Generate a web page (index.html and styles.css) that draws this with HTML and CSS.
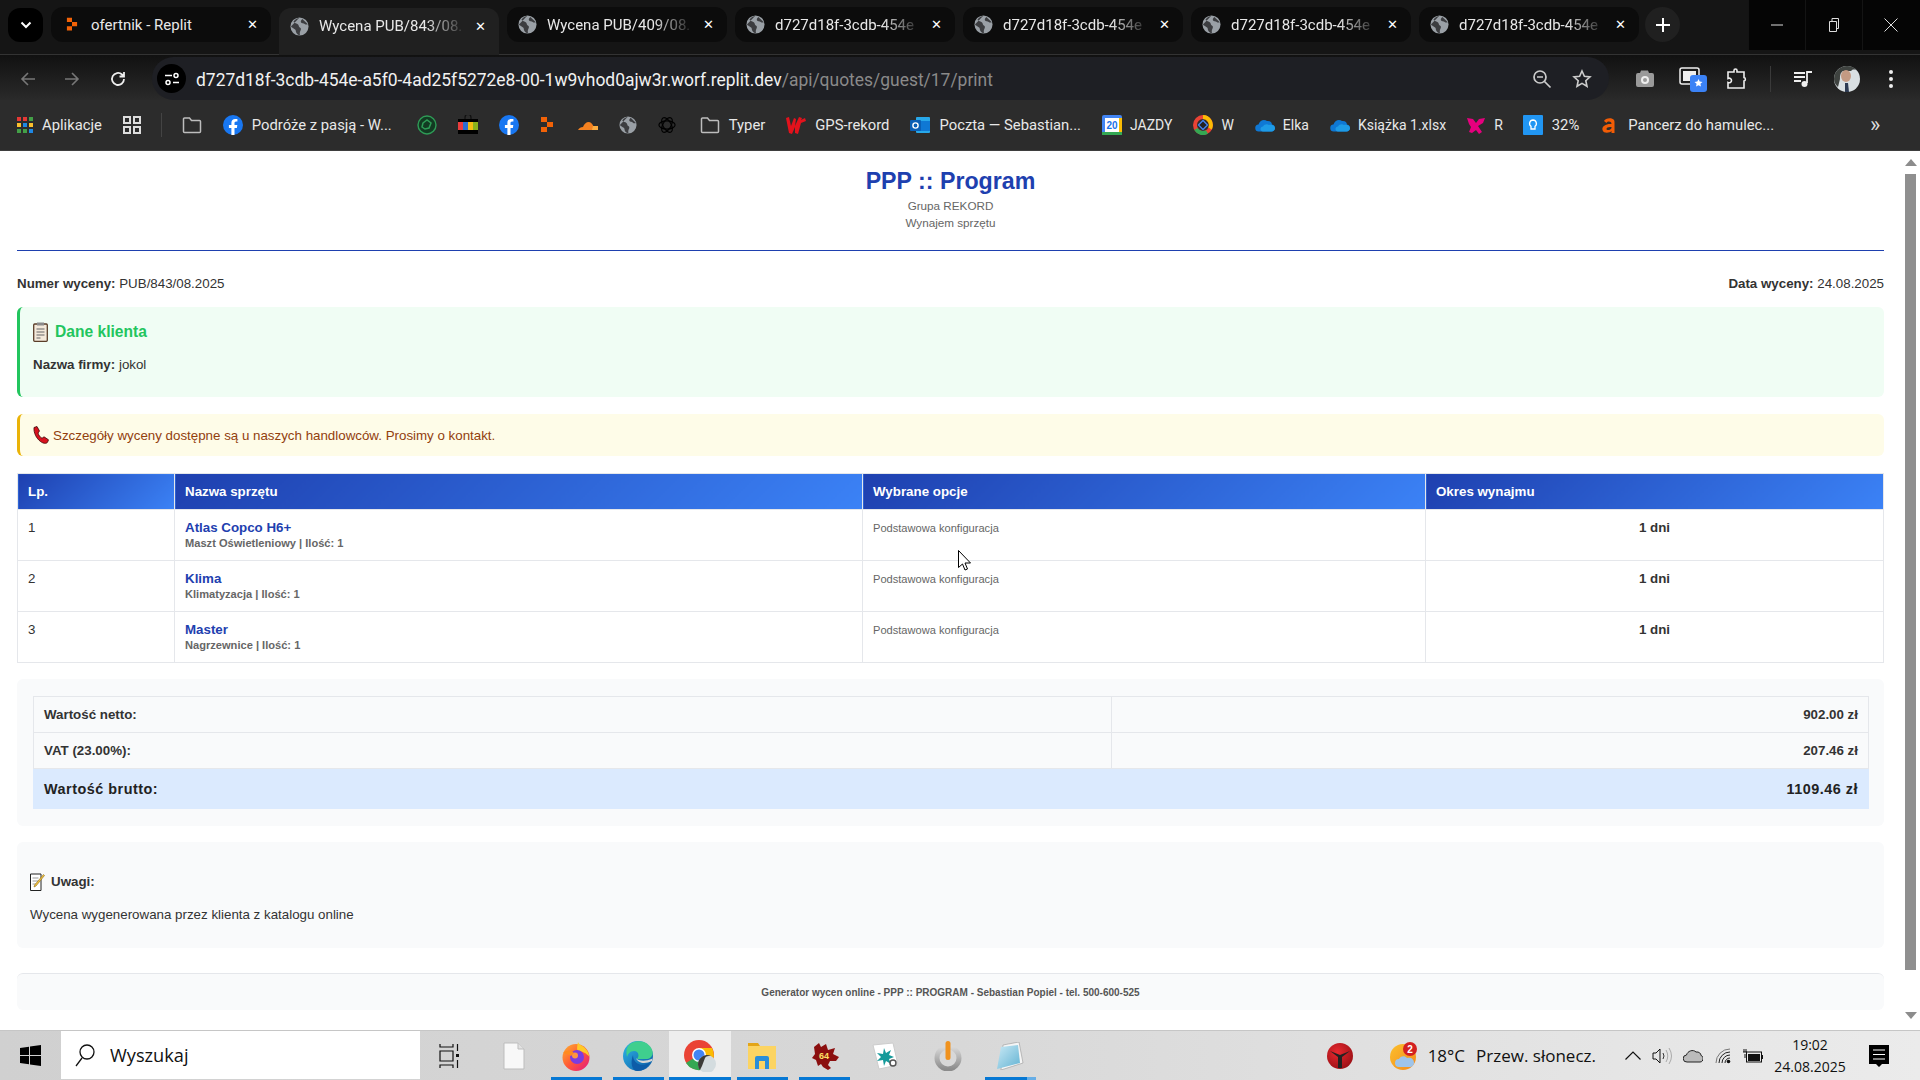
FILE: index.html
```html
<!DOCTYPE html>
<html lang="pl">
<head>
<meta charset="utf-8">
<title>Wycena PUB/843/08.2025</title>
<link rel="stylesheet" href="styles.css">
</head>
<body>
<svg class="defs" aria-hidden="true">
  <defs>
    <linearGradient id="ffg" x1="0" y1="0" x2="1" y2="1"><stop offset="0" stop-color="#ffb02e"/><stop offset=".5" stop-color="#ff5a36"/><stop offset="1" stop-color="#e31587"/></linearGradient>
    <linearGradient id="edg" x1="0" y1="0" x2="1" y2="1"><stop offset="0" stop-color="#2fb6e8"/><stop offset="1" stop-color="#0c59a4"/></linearGradient>
    <linearGradient id="pwr" x1="0" y1="0" x2="0" y2="1"><stop offset="0" stop-color="#d9d9d9"/><stop offset="1" stop-color="#8c8c8c"/></linearGradient>
    <linearGradient id="nte" x1="0" y1="0" x2="1" y2="1"><stop offset="0" stop-color="#c9e9f5"/><stop offset="1" stop-color="#63b3d3"/></linearGradient>
    <radialGradient id="ball" cx=".4" cy=".35" r=".8"><stop offset="0" stop-color="#e8292f"/><stop offset="1" stop-color="#8f0c12"/></radialGradient>
    <linearGradient id="wth" x1="0" y1="0" x2="1" y2="1"><stop offset="0" stop-color="#fcc02d"/><stop offset="1" stop-color="#f28a1d"/></linearGradient>
    <symbol id="globe" viewBox="0 0 20 20"><circle cx="10" cy="10" r="9.5" fill="#9aa0a6"/><path d="M10 .6c-2 1-5 2-6.400 4.500C5 7 7 6.500 8.500 8c1 1 .4 2.300 1.800 3 1.400.6 1.500 2 .7 3.500-.5 1-1 2.500-.5 4.800-3-.2-4.500-2.800-4.500-5 0-1.600-3-2-5-4.300M13 2c-1 1-2 2-1.500 3.400.6 1.500 3 .8 4 2 .7.800 2 .6 3.300.3" fill="#3c3d40"/></symbol>
    <symbol id="fb" viewBox="0 0 20 20"><circle cx="10" cy="10" r="10" fill="#1877f2"/><path d="M13.900 12.900l.4-2.900h-2.800V8.100c0-.8.400-1.600 1.600-1.600h1.300V4.100s-1.100-.2-2.200-.2c-2.300 0-3.800 1.400-3.800 3.900V10H5.900v2.900h2.500V20h3.100v-7.100z" fill="#fff"/></symbol>
    <symbol id="replit" viewBox="0 0 14 20"><path d="M1 2h6v5H1zM7 7h6v5H7zM1 12h6v5H1z" fill="#f26207"/></symbol>
    <symbol id="folder" viewBox="0 0 20 18"><path d="M1.500 15.500V3a1 1 0 0 1 1-1h5l2 2.500h8a1 1 0 0 1 1 1v10a1 1 0 0 1-1 1h-15a1 1 0 0 1-1-1z" fill="none" stroke="#bdbdbd" stroke-width="1.500"/></symbol>
    <symbol id="onedrive" viewBox="0 0 20 14"><path d="M4 13.500a3.500 3.500 0 0 1-.5-7C4.500 2.500 9 .5 12 3c3-.5 5 1.500 5 3.500 2 .3 3 1.700 3 3.300 0 2-1.500 3.700-3.500 3.700z" fill="#0f78d4"/><path d="M8 13.500c-1.500 0-2.500-1-2.500-2.500 0-1.300 1-2.300 2.500-2.500 1-2 4-3 6-1.500 2-.8 6 0 6 3.300 0 2-1.500 3.200-3.500 3.200z" fill="#1e9be6"/></symbol>
  </defs>
</svg>

<header class="tabstrip">
  <button class="tab-menu" aria-label="Lista kart"><svg width="12" height="8" viewBox="0 0 12 8"><path d="M1.500 1.500L6 6l4.500-4.500" fill="none" stroke="#fff" stroke-width="2"/></svg></button>
  <div class="tabs">
    <div class="tab"><span class="tab-icon"><svg width="12" height="17"><use href="#replit"/></svg></span><span class="tab-title">ofertnik - Replit</span><span class="tab-close">✕</span></div>
    <div class="tab tab-active"><span class="tab-icon"><svg width="19" height="19"><use href="#globe"/></svg></span><span class="tab-title tab-fade">Wycena PUB/843/08.</span><span class="tab-close">✕</span></div>
    <div class="tab"><span class="tab-icon"><svg width="19" height="19"><use href="#globe"/></svg></span><span class="tab-title tab-fade">Wycena PUB/409/08.</span><span class="tab-close">✕</span></div>
    <div class="tab"><span class="tab-icon"><svg width="19" height="19"><use href="#globe"/></svg></span><span class="tab-title tab-fade">d727d18f-3cdb-454e</span><span class="tab-close">✕</span></div>
    <div class="tab"><span class="tab-icon"><svg width="19" height="19"><use href="#globe"/></svg></span><span class="tab-title tab-fade">d727d18f-3cdb-454e</span><span class="tab-close">✕</span></div>
    <div class="tab"><span class="tab-icon"><svg width="19" height="19"><use href="#globe"/></svg></span><span class="tab-title tab-fade">d727d18f-3cdb-454e</span><span class="tab-close">✕</span></div>
    <div class="tab"><span class="tab-icon"><svg width="19" height="19"><use href="#globe"/></svg></span><span class="tab-title tab-fade">d727d18f-3cdb-454e</span><span class="tab-close">✕</span></div>
  </div>
  <button class="tab-new" aria-label="Nowa karta"><svg width="14" height="14" viewBox="0 0 14 14"><path d="M7 0v14M0 7h14" stroke="#fff" stroke-width="2"/></svg></button>
  <div class="winctl">
    <span class="winbtn"><svg width="12" height="12" viewBox="0 0 12 12"><path d="M0 6h12" stroke="#ddd"/></svg></span>
    <span class="winbtn"><svg width="14" height="14" viewBox="0 0 14 14"><path d="M2.500 3.500h7v10h-7zM5 3V.5h6.500v10H10" fill="none" stroke="#ddd"/></svg></span>
    <span class="winbtn"><svg width="14" height="14" viewBox="0 0 14 14"><path d="M.5.500l13 13M13.500.500l-13 13" stroke="#ddd"/></svg></span>
  </div>
</header>

<nav class="toolbar">
  <span class="tb-btn"><svg width="16" height="16" viewBox="0 0 16 16"><path d="M15 8H2M8 2L2 8l6 6" fill="none" stroke="#777" stroke-width="1.600"/></svg></span>
  <span class="tb-btn"><svg width="16" height="16" viewBox="0 0 16 16"><path d="M1 8h13M8 2l6 6-6 6" fill="none" stroke="#777" stroke-width="1.600"/></svg></span>
  <span class="tb-btn tb-reload"><svg width="18" height="18" viewBox="0 0 18 18"><path d="M15 9a6 6 0 1 1-2-4.500L15 6.500M15 2v4.500h-4.500" fill="none" stroke="#eee" stroke-width="1.800"/></svg></span>
  <div class="omnibox">
    <span class="site-info"><svg width="16" height="16" viewBox="0 0 16 16"><g fill="none" stroke="#fff" stroke-width="1.500"><path d="M1 4.500h7M9 11.500h6"/><circle cx="12" cy="4.500" r="2"/><circle cx="4" cy="11.500" r="2"/></g></svg></span>
    <span class="url"><span class="url-host">d727d18f-3cdb-454e-a5f0-4ad25f5272e8-00-1w9vhod0ajw3r.worf.replit.dev</span><span class="url-path">/api/quotes/guest/17/print</span></span>
    <span class="omni-btn"><svg width="20" height="20" viewBox="0 0 20 20"><circle cx="8" cy="8" r="6" fill="none" stroke="#ccc" stroke-width="1.700"/><path d="M12.500 12.500L18.500 18.500M5 8h6" stroke="#ccc" stroke-width="1.700"/></svg></span>
    <span class="omni-btn"><svg width="20" height="20" viewBox="0 0 20 20"><path d="M10 2l2.400 5.300 5.600.6-4.200 3.800 1.200 5.600L10 14.400l-5 2.900 1.200-5.600L2 7.900l5.600-.6z" fill="none" stroke="#ccc" stroke-width="1.600"/></svg></span>
  </div>
  <div class="tb-right">
    <span class="tb-btn"><svg width="20" height="18" viewBox="0 0 20 18"><path d="M1 5a2 2 0 0 1 2-2h2l1-2.500h7l1 2.500h3a2 2 0 0 1 2 2v10a2 2 0 0 1-2 2H3a2 2 0 0 1-2-2z" fill="#9a9a9a"/><circle cx="10" cy="10" r="4" fill="#eee"/><circle cx="10" cy="10" r="2" fill="#9a9a9a"/></svg></span>
    <span class="tb-btn tb-pip"><svg width="28" height="28" viewBox="0 0 28 28"><rect x="1" y="3" width="19" height="16" rx="2" fill="none" stroke="#eee" stroke-width="1.500"/><rect x="4" y="6" width="13" height="10" fill="#eee"/><rect x="11" y="10" width="17" height="17" rx="3" fill="#3b82f6"/><path d="M19.500 14l1.200 2.600 2.800.3-2.100 1.900.6 2.800-2.500-1.400-2.500 1.400.6-2.800-2.100-1.900 2.800-.3z" fill="#fff"/></svg></span>
    <span class="tb-btn"><svg width="22" height="22" viewBox="0 0 22 22"><path d="M2 4h6V2.500a1.500 1.500 0 0 1 3 0V4h7v5.500a1.800 1.800 0 0 1 0 3.500V20H2v-5.500c2 .8 3.500-.6 3.500-2S4 9.500 2 10.500z" fill="none" stroke="#eee" stroke-width="1.600"/></svg></span>
    <span class="tb-divider"></span>
    <span class="tb-btn"><svg width="20" height="18" viewBox="0 0 20 18"><path d="M1 3h11M1 7h11M1 11h7" stroke="#eee" stroke-width="1.800"/><path d="M14 13V2h5" fill="none" stroke="#eee" stroke-width="1.800"/><circle cx="11.500" cy="14" r="3" fill="#eee"/></svg></span>
    <span class="tb-btn"><svg width="26" height="26" viewBox="0 0 26 26"><circle cx="13" cy="13" r="13" fill="#d9dfe2"/><path d="M0 13A13 13 0 0 1 13 0c4 0 7 1 9 4-3-1-4 0-5 1H9C6 7 6 10 6 13l-2 8C2 19 0 17 0 13z" fill="#3f4340"/><ellipse cx="12" cy="10" rx="5" ry="6" fill="#c49a83"/><path d="M11 17h3l1 9h-4z" fill="#2d3a52"/></svg></span>
    <span class="tb-btn"><svg width="4" height="18" viewBox="0 0 4 18"><circle cx="2" cy="2" r="2" fill="#eee"/><circle cx="2" cy="9" r="2" fill="#eee"/><circle cx="2" cy="16" r="2" fill="#eee"/></svg></span>
  </div>
</nav>

<nav class="bookmarks">
  <span class="bm bm-w"><svg class="ic16" viewBox="0 0 16 16"><g><rect x="0" y="0" width="4" height="4" fill="#e53935"/><rect x="6" y="0" width="4" height="4" fill="#e53935"/><rect x="12" y="0" width="4" height="4" fill="#43a047"/><rect x="0" y="6" width="4" height="4" fill="#fbc02d"/><rect x="6" y="6" width="4" height="4" fill="#1e88e5"/><rect x="12" y="6" width="4" height="4" fill="#fbc02d"/><rect x="0" y="12" width="4" height="4" fill="#43a047"/><rect x="6" y="12" width="4" height="4" fill="#43a047"/><rect x="12" y="12" width="4" height="4" fill="#1e88e5"/></g></svg>Aplikacje</span>
  <span class="bm bm-only"><svg class="ic18" viewBox="0 0 18 18"><g fill="none" stroke="#ddd" stroke-width="2"><rect x="1" y="1" width="6" height="6"/><rect x="11" y="1" width="6" height="6"/><rect x="1" y="11" width="6" height="6"/><rect x="11" y="11" width="6" height="6"/></g></svg></span>
  <span class="bm-sep"></span>
  <span class="bm bm-only"><svg class="ic20" viewBox="0 0 20 18"><use href="#folder"/></svg></span>
  <span class="bm bm-w bm-wide"><svg class="ic20" viewBox="0 0 20 20"><use href="#fb"/></svg>Podróże z pasją - W...</span>
  <span class="bm bm-only"><svg class="ic20" viewBox="0 0 20 20"><circle cx="10" cy="10" r="9" fill="#123a22" stroke="#2e9b56" stroke-width="1.400"/><path d="M6 8l4-3 4 3-2 5-4 1-3-2z" fill="none" stroke="#2e9b56" stroke-width="1.500"/></svg></span>
  <span class="bm bm-only"><svg class="ic20" viewBox="0 0 20 20"><path d="M7 4V2.500a3 3 0 0 1 6 0V4" fill="none" stroke="#111" stroke-width="1.200"/><rect x="0" y="4" width="20" height="3" fill="#000"/><rect x="0" y="7" width="5" height="8" fill="#ea3d3d"/><rect x="5" y="7" width="5" height="8" fill="#2a6ed0"/><rect x="10" y="7" width="5" height="8" fill="#f3bd12"/><rect x="15" y="7" width="5" height="8" fill="#8ab21c"/><rect x="0" y="15" width="20" height="4" fill="#000"/></svg></span>
  <span class="bm bm-only"><svg class="ic20" viewBox="0 0 20 20"><use href="#fb"/></svg></span>
  <span class="bm bm-only bm-pull"><svg class="ic20" viewBox="0 0 14 20"><use href="#replit"/></svg></span>
  <span class="bm bm-only"><svg class="ic20" viewBox="0 0 20 20"><path d="M0 15c1-2 3-3 5-3 1-3 3-5 6-5 2 0 4 3 5 5 2 0 3 1 4 3z" fill="#f48120"/><path d="M15 11h5v4h-6z" fill="#fbad41"/></svg></span>
  <span class="bm bm-only"><svg class="ic18" viewBox="0 0 20 20"><use href="#globe"/></svg></span>
  <span class="bm bm-only"><svg class="ic18" viewBox="0 0 20 20"><g fill="none" stroke="#000" stroke-width="1.300"><ellipse cx="10" cy="10" rx="9" ry="4.500"/><ellipse cx="10" cy="10" rx="9" ry="4.500" transform="rotate(60 10 10)"/><ellipse cx="10" cy="10" rx="9" ry="4.500" transform="rotate(120 10 10)"/></g></svg></span>
  <span class="bm bm-w bm-push"><svg class="ic20" viewBox="0 0 20 18"><use href="#folder"/></svg>Typer</span>
  <span class="bm bm-w"><svg class="ic20" viewBox="0 0 20 20"><path d="M0 3l3-1 2 9 3-8 2 1-1 7 4-9 3 1-1 2 4-2 1 3-5 2-3 11-3-1 0-6-3 7-3-1z" fill="#e3121c"/></svg>GPS-rekord</span>
  <span class="bm bm-w"><svg class="ic20" viewBox="0 0 20 20"><rect x="6" y="2" width="14" height="16" rx="1" fill="#28a8ea"/><rect x="10" y="6" width="10" height="10" fill="#0f78d4"/><rect x="0" y="5" width="11" height="11" rx="1" fill="#0a5fb4"/><circle cx="5.500" cy="10.500" r="2.600" fill="none" stroke="#fff" stroke-width="1.400"/></svg>Poczta — Sebastian...</span>
  <span class="bm"><svg class="ic20" viewBox="0 0 20 20"><rect width="20" height="20" rx="2" fill="#4285f4"/><rect x="3" y="3" width="14" height="14" fill="#fff"/><rect y="17" width="20" height="3" fill="#34a853"/><rect x="17" y="3" width="3" height="14" fill="#fbbc04"/><text x="10" y="14" class="cal-num">20</text></svg>JAZDY</span>
  <span class="bm"><svg class="ic20" viewBox="0 0 20 20"><circle cx="10" cy="10" r="8" fill="none" stroke="#ea4335" stroke-width="4"/><path d="M3 14a8 8 0 0 0 11 3" fill="none" stroke="#34a853" stroke-width="4"/><path d="M10 2a8 8 0 0 1 7 11.500" fill="none" stroke="#fbbc04" stroke-width="4"/><path d="M5.500 10L10 5.500 14.500 10 10 14.500z" fill="#222" stroke="#4285f4" stroke-width="1.300"/></svg>W</span>
  <span class="bm"><svg class="ic20" viewBox="0 0 20 14"><use href="#onedrive"/></svg>Elka</span>
  <span class="bm"><svg class="ic20" viewBox="0 0 20 14"><use href="#onedrive"/></svg>Książka 1.xlsx</span>
  <span class="bm bm-less"><svg class="ic20" viewBox="0 0 20 20"><path d="M1 3l6 1 3 4 3-4 6-1-2 5-5 3 4 6-3 2-3-4-4 3-3-1 2-5-2-3z" fill="#e6007e"/></svg>R</span>
  <span class="bm bm-w bm-less"><svg class="ic20" viewBox="0 0 20 20"><rect width="20" height="20" rx="1" fill="#2196f3"/><path d="M10 5a3.500 3.500 0 0 0-2 6.300V14h4v-2.700A3.500 3.500 0 0 0 10 5z" fill="none" stroke="#fff" stroke-width="1.300"/></svg>32%</span>
  <span class="bm bm-w bm-less"><svg class="ic20" viewBox="0 0 20 20"><path d="M5 6c1-3 8-4 10-1 .6 1 .5 2.500.5 4v9h-3v-2c-1.500 2-8 3-9-1-1-4 4-6.500 9-6 0-3-4-3-5-1zm7.500 6c-3-.5-5 .6-5 2 0 1.500 4 1.500 5-1z" fill="#f25c05"/></svg>Pancerz do hamulec...</span>
  <span class="bm-more">»</span>
</nav>

<div class="viewport">
  <main class="page">
    <header class="doc-head">
      <h1 class="doc-title">PPP :: Program</h1>
      <p class="doc-sub">Grupa REKORD</p>
      <p class="doc-sub">Wynajem sprzętu</p>
    </header>
    <div class="doc-meta">
      <span><strong>Numer wyceny:</strong> PUB/843/08.2025</span>
      <span><strong>Data wyceny:</strong> 24.08.2025</span>
    </div>
    <section class="client-box">
      <h2 class="client-title"><svg class="emoji-clip" viewBox="0 0 15 20"><rect x=".7" y="2" width="13.600" height="17.300" rx="1" fill="#f3e9da" stroke="#5a3d28" stroke-width="1.300"/><rect x="4" y=".5" width="7" height="3" fill="#8a8a8a"/><path d="M3.500 7h8M3.500 10h8M3.500 13h8M3.500 16h4" stroke="#666" stroke-width="1.200"/></svg>Dane klienta</h2>
      <p class="client-line"><strong>Nazwa firmy:</strong> jokol</p>
    </section>
    <section class="notice-box"><svg class="emoji-phone" viewBox="0 0 16 18"><path d="M1 1.500L4 .5l2.500 4.500L5 7c.8 2.500 2 4 4 5.300l2-1.500 4.500 3-1 2.500c-1 1.500-4 1.500-7-.8C3.500 12.500.500 7 1 1.500z" fill="#d8121f" stroke="#3a0808" stroke-width=".8"/></svg><span class="notice-text">Szczegóły wyceny dostępne są u naszych handlowców. Prosimy o kontakt.</span></section>
    <table class="items">
      <colgroup><col class="c-lp"><col class="c-name"><col class="c-opt"><col class="c-per"></colgroup>
      <thead>
        <tr><th>Lp.</th><th>Nazwa sprzętu</th><th>Wybrane opcje</th><th>Okres wynajmu</th></tr>
      </thead>
      <tbody>
        <tr><td>1</td><td><div class="item-name">Atlas Copco H6+</div><div class="item-sub">Maszt Oświetleniowy | Ilość: 1</div></td><td class="item-opt">Podstawowa konfiguracja</td><td class="item-per">1 dni</td></tr>
        <tr><td>2</td><td><div class="item-name">Klima</div><div class="item-sub">Klimatyzacja | Ilość: 1</div></td><td class="item-opt">Podstawowa konfiguracja</td><td class="item-per">1 dni</td></tr>
        <tr><td>3</td><td><div class="item-name">Master</div><div class="item-sub">Nagrzewnice | Ilość: 1</div></td><td class="item-opt">Podstawowa konfiguracja</td><td class="item-per">1 dni</td></tr>
      </tbody>
    </table>
    <section class="totals-box">
      <table class="totals">
        <colgroup><col class="t-label"><col class="t-value"></colgroup>
        <tr><td>Wartość netto:</td><td>902.00 zł</td></tr>
        <tr><td>VAT (23.00%):</td><td>207.46 zł</td></tr>
        <tr class="gross"><td>Wartość brutto:</td><td>1109.46 zł</td></tr>
      </table>
    </section>
    <section class="notes-box">
      <div class="notes-head"><svg class="emoji-memo" viewBox="0 0 15 18"><path d="M.5 1h10.500v16.500H.5z" fill="#fff" stroke="#222"/><path d="M2.500 5h6M2.500 8h6M2.500 11h4" stroke="#999"/><path d="M13.500 1.500l1 1L6 13l-2 1 .6-2z" fill="#f5c342" stroke="#8a6a14" stroke-width=".6"/></svg><strong>Uwagi:</strong></div>
      <p class="notes-text">Wycena wygenerowana przez klienta z katalogu online</p>
    </section>
    <footer class="doc-foot">Generator wycen online - PPP :: PROGRAM - Sebastian Popiel - tel. 500-600-525</footer>
  </main>
  <aside class="scrollbar"><span class="sb-up"></span><span class="sb-thumb"></span><span class="sb-down"></span></aside>
  <svg class="cursor" width="13" height="21" viewBox="0 0 13 21"><path d="M.5.500v17l4-3.500 2.500 6 2.500-1-2.500-6h5.500z" fill="#fff" stroke="#000"/></svg>
</div>

<footer class="taskbar">
  <span class="start"><svg width="21" height="21" viewBox="0 0 21 21"><path d="M0 3l9-1.300V10H0zM10 1.500L21 0v10H10zM0 11h9v8.300L0 18zM10 11h11v10l-11-1.500z" fill="#000"/></svg></span>
  <div class="search"><svg width="20" height="24" viewBox="0 0 20 24"><circle cx="12" cy="9" r="7" fill="none" stroke="#111" stroke-width="1.300"/><path d="M7 15L1 23" stroke="#111" stroke-width="1.300"/></svg><span class="search-text">Wyszukaj</span></div>
  <div class="task-icons">
    <span class="task task-view"><svg width="20" height="24" viewBox="0 0 20 24"><path d="M1 0v3h13V0M1 7h13v10H1zM1 24v-3h13v3M18.500 0v7M18.500 16v8" fill="none" stroke="#111" stroke-width="1.200"/><rect x="17" y="10" width="3" height="3" fill="#111"/></svg></span>
    <span class="task task-doc"><svg width="22" height="28" viewBox="0 0 22 28"><path d="M1 1h14l6 6v20H1z" fill="#f8f8f8" stroke="#bdbdbd"/><path d="M15 1v6h6" fill="#e2e2e2" stroke="#bdbdbd"/></svg></span>
    <span class="task task-on"><svg width="28" height="30" viewBox="0 0 28 30"><circle cx="14" cy="16.500" r="13.500" fill="url(#ffg)"/><path d="M16 1c1 3 4 3 7 6 3 3 4 6 4.500 9-3-4-8-6-12-6-1-3 0-6 .5-9z" fill="#ffca28"/><circle cx="15" cy="16" r="7" fill="#7b3ce0"/><circle cx="13" cy="14.500" r="3" fill="#ff9640"/><path d="M1 12c3-3 8-3 11 0l-3 3c-3-2-6-2-8-3z" fill="#ff8a1f"/></svg></span>
    <span class="task task-on"><svg width="30" height="30" viewBox="0 0 30 30"><circle cx="15" cy="15" r="15" fill="url(#edg)"/><path d="M6 4C12-2 26-1 29.500 10 30.500 15 27 18 23 18L14 18C17 14 15 10 11 10 7 10 5 13 4 16 3 11 3 7 6 4z" fill="#3fcf8e"/><path d="M10 14c0 8 8 13 17 7.500-3 5.500-7 8.500-12.500 8.500-5.500 0-7.500-8-4.500-16z" fill="#0d5ca8"/><path d="M13 17C15 20 22 21 29.500 17.500L29 20C23 23 15 23 13 17z" fill="#d6d6d6"/></svg></span>
    <span class="task task-on task-current"><svg width="32" height="32" viewBox="0 0 32 32"><circle cx="15" cy="15" r="15" fill="#ea4335"/><path d="M15 15L2 23a15 15 0 0 0 17 6.500z" fill="#34a853"/><path d="M15 8h13a15 15 0 0 1-9 21.500L15 15z" fill="#fbbc04"/><circle cx="15" cy="15" r="7" fill="#fff"/><circle cx="15" cy="15" r="5.500" fill="#4285f4"/><circle cx="23" cy="24" r="9" fill="#d4dcdf"/><path d="M14 24a9 9 0 0 1 13-8c-3 0-5 0-6 2l-3 8-2 4c-1-1-2-3-2-6z" fill="#3b3b38"/></svg></span>
    <span class="task task-on"><svg width="28" height="26" viewBox="0 0 28 26"><path d="M0 0h10l2 3h-12z" fill="#e3a518"/><path d="M0 3h28v23H0z" fill="#fcd462"/><path d="M9 13h10a2 2 0 0 1 2 2v11h-4v-8h-6v8H7V15a2 2 0 0 1 2-2z" fill="#2b8ed8"/></svg></span>
    <span class="task task-on"><svg width="30" height="30" viewBox="0 0 30 30"><path d="M5 6l5-4 2 4 5-3 2 6 7-2-2 6 6 3-3 4-6 0-2 4 3 3-3 2-5-3-2-3-3 2-2-6-4-2 3-4z" fill="#8b0f0f"/><text x="15" y="18" class="aida-num">64</text></svg></span>
    <span class="task"><svg width="28" height="28" viewBox="0 0 28 28"><path d="M1 3l20-2 5 22-19 4z" fill="#fff" stroke="#ccc"/><path d="M12 6l2 5 5-3-2 5 5 2-5 2 2 5-5-3-2 5-1-6-6 1 4-4-4-4 6 1z" fill="#149a9a"/><circle cx="21" cy="21" r="3" fill="none" stroke="#555" stroke-width="1.500"/></svg></span>
    <span class="task"><svg width="30" height="30" viewBox="0 0 30 30"><circle cx="15" cy="17" r="11" fill="none" stroke="url(#pwr)" stroke-width="5"/><rect x="12.500" y="0" width="5" height="19" rx="2.500" fill="#f0921e"/></svg></span>
    <span class="task task-on task-split"><svg width="28" height="28" viewBox="0 0 28 28"><path d="M7 3l16-3 4 21-22 7z" fill="#f5f5f5" stroke="#999" stroke-width=".6"/><path d="M5 5l17-2 2 18-23 6z" fill="url(#nte)"/></svg></span>
  </div>
  <div class="tray">
    <span class="tray-ball"><svg width="26" height="26" viewBox="0 0 26 26"><circle cx="13" cy="13" r="13" fill="url(#ball)"/><path d="M3 8l10 4 10-4-8 6v11h-4V14z" fill="#222"/></svg></span>
    <span class="tray-weather"><svg width="30" height="28" viewBox="0 0 30 28"><circle cx="14" cy="15" r="13" fill="url(#wth)"/><path d="M10 25a4 4 0 0 1 0-8c1-3 6-4 8-1 4-1 7 1 7 5 0 2-2 4-4 4z" fill="#9ec4ea"/><circle cx="21" cy="7" r="7" fill="#d32020"/><text x="21" y="10.500" class="badge-num">2</text></svg></span>
    <span class="tray-text">18°C</span>
    <span class="tray-text tray-cond">Przew. słonecz.</span>
    <span class="tray-ic tray-caret"><svg width="16" height="9" viewBox="0 0 16 9"><path d="M.5 8.500L8 1l7.500 7.500" fill="none" stroke="#111" stroke-width="1.200"/></svg></span>
    <span class="tray-ic tray-speaker"><svg width="20" height="18" viewBox="0 0 20 18"><path d="M1 6h3l4-4v14l-4-4H1z" fill="none" stroke="#111"/><path d="M11 6q2 3 0 6" fill="none" stroke="#333"/><path d="M14 3q3.500 6 0 12M17 1q5 8 0 16" fill="none" stroke="#aaa"/></svg></span>
    <span class="tray-ic"><svg width="20" height="14" viewBox="0 0 20 14"><path d="M4 13a3.500 3.500 0 0 1-.5-7C4.500 2 10 0 13 3c3-.5 5 1.500 5 3.500 1.500.5 2 1.500 2 3 0 2-1 3.500-3 3.500z" fill="#bbb" stroke="#222"/></svg></span>
    <span class="tray-ic tray-near"><svg width="16" height="16" viewBox="0 0 16 16"><g fill="none" stroke="#222"><path d="M1 15A14 14 0 0 1 15 1" stroke="#777"/><path d="M4 15A11 11 0 0 1 15 4"/><path d="M7 15a8 8 0 0 1 8-8"/><path d="M10 15a5 5 0 0 1 5-5"/></g><circle cx="13.500" cy="13.500" r="1.800" fill="#111"/></svg></span>
    <span class="tray-ic tray-near"><svg width="20" height="14" viewBox="0 0 20 14"><rect x="3.500" y="3" width="15" height="10" fill="none" stroke="#111"/><rect x="5" y="5" width="12" height="7" fill="#111"/><rect x="18.500" y="6" width="1.500" height="4" fill="#111"/><path d="M3 0v3M1 0v3M0 3h4M2 5v4" stroke="#111"/></svg></span>
    <span class="clock"><span>19:02</span><span>24.08.2025</span></span>
    <span class="notif"><svg width="20" height="22" viewBox="0 0 20 22"><path d="M0 0h20v19h-7l-3 3-3-3H0z" fill="#000"/><path d="M4 5h12M4 9.500h12M4 14h12" stroke="#fff"/></svg></span>
  </div>
</footer>
</body>
</html>
```
FILE: styles.css
```css
* { box-sizing: border-box; }
html, body { margin: 0; height: 100%; }
body {
  width: 1920px;
  height: 1080px;
  overflow: hidden;
  display: flex;
  flex-direction: column;
  font-family: "Liberation Sans", Arial, sans-serif;
  background: #fff;
  color: #333;
}
.defs { width: 0; height: 0; display: block; flex: none; overflow: hidden; }

/* tab strip */
.tabstrip {
  height: 55px;
  flex: none;
  display: flex;
  align-items: flex-start;
  background: #151515;
  border-bottom: 1px solid #333;
  padding-left: 8px;
  position: relative;
  font-family: Roboto, "Liberation Sans", sans-serif;
}
.tab-menu {
  width: 35px; height: 34px; margin-top: 8px;
  background: #000; border: 0; border-radius: 12px;
  display: flex; align-items: center; justify-content: center; padding: 0;
}
.tabs { display: flex; gap: 8px; margin-left: 8px; }
.tab {
  width: 220px; height: 35px; margin-top: 7px;
  background: #0c0c0c; border-radius: 12px;
  display: flex; align-items: center;
  padding: 0 14px 0 11px;
  color: #e8e8e8; font-size: 15px;
}
.tab-active { height: 47px; margin-top: 8px; background: #202020; border-radius: 12px 12px 0 0; padding-bottom: 11px; }
.tab-icon { width: 19px; height: 19px; flex: none; display: flex; align-items: center; justify-content: center; margin-right: 10px; }
.tab-title { flex: 1; white-space: nowrap; min-width: 0; }
.tab-fade { -webkit-mask-image: linear-gradient(to right, #000 72%, transparent 100%); mask-image: linear-gradient(to right, #000 72%, transparent 100%); }
.tab-close { width: 10px; margin-left: 8px; font-size: 13px; font-weight: 700; color: #fff; line-height: 1; flex: none; text-align: center; font-family: "DejaVu Sans", sans-serif; }
.tab-new {
  width: 35px; height: 35px; margin: 7px 0 0 6px; border-radius: 50%;
  background: #202020; border: 0; padding: 0;
  display: flex; align-items: center; justify-content: center;
}
.winctl { margin-left: auto; display: flex; height: 50px; background: #050505; padding-right: 1px; }
.winbtn { width: 57px; display: flex; align-items: center; justify-content: center; border-left: 1px solid #141414; }

/* toolbar */
.toolbar {
  height: 45px; flex: none;
  display: flex; align-items: flex-end;
  padding-left: 6px;
  background: linear-gradient(#111, #2a2a2a);
}
.tb-btn { width: 44px; height: 43px; display: flex; align-items: center; justify-content: center; flex: none; }
.tb-reload { margin-left: 2px; margin-right: -2px; }
.omnibox {
  width: 1457px; height: 43px; margin-left: 14px;
  background: #1e1f24; border-radius: 22px;
  display: flex; align-items: center;
  padding: 0 7px 0 5px;
  font-family: Roboto, "Liberation Sans", sans-serif;
  font-size: 17.450px;
}
.site-info { width: 29px; height: 29px; border-radius: 50%; background: #000; display: flex; align-items: center; justify-content: center; flex: none; }
.url { margin-left: 10px; flex: 1; white-space: nowrap; padding-top: 2px; }
.url-host { color: #f1f1f1; }
.url-path { color: #8a8a8a; }
.omni-btn { width: 40px; display: flex; justify-content: center; flex: none; }
.tb-right { display: flex; margin-left: 14px; align-items: center; }
.tb-pip { margin-left: 4px; }
.tb-divider { width: 22px; height: 26px; display: flex; justify-content: center; }
.tb-divider::before { content: ""; width: 1px; background: #3a3a3a; }

/* bookmarks */
.bookmarks {
  height: 51px; flex: none;
  display: flex; align-items: center; gap: 21px;
  padding: 0 0 1px 17px;
  background: #2c2c2c;
  border-bottom: 1px solid #3e3e3e;
  color: #e8e8e8;
  font-family: Roboto, "Liberation Sans", sans-serif;
  font-size: 14px;
}
.bm { display: flex; align-items: center; gap: 8px; white-space: nowrap; flex: none; }
.bm-w { font-size: 14.800px; gap: 9px; }
.bm-wide { margin-right: 4px; }
.bm-pull { margin-left: -3px; }
.bm-push { margin-left: 3px; }
.bm-less { margin-left: -1px; }
.ic16 { width: 16px; height: 16px; }
.ic18 { width: 18px; height: 18px; }
.ic20 { width: 20px; height: 20px; }
.bm-sep { width: 1px; height: 24px; background: #444; margin: 0 -1px; flex: none; }
.bm-more { margin-left: 75px; font-size: 22px; color: #ddd; line-height: 1; }
.cal-num { font: 700 10px "Liberation Sans", sans-serif; fill: #1a73e8; text-anchor: middle; }

/* viewport */
.viewport { height: 879px; flex: none; display: flex; position: relative; background: #fff; overflow: hidden; }
.page { width: 1904px; flex: none; padding: 16px 20px 0 17px; }
.scrollbar { width: 16px; flex: none; display: flex; flex-direction: column; align-items: center; padding: 8px 4px 6px 1px; background: #fff; }
.sb-up { width: 0; height: 0; flex: none; border: 6px solid transparent; border-top: 0; border-bottom: 7px solid #8c8c8c; }
.sb-down { width: 0; height: 0; flex: none; border: 6px solid transparent; border-bottom: 0; border-top: 7px solid #8c8c8c; }
.sb-thumb { width: 11px; height: 796px; margin: 8px 0 42px; background: #8f8f8f; flex: none; }
.cursor { position: absolute; left: 958px; top: 399px; }

/* document */
.doc-head { text-align: center; border-bottom: 1px solid #1e40af; padding-bottom: 19px; }
.doc-title { margin: 0 0 2px; font-size: 23.200px; line-height: 28px; color: #1e40af; font-weight: 700; }
.doc-sub { margin: 0; font-size: 11.700px; line-height: 17px; color: #666; }
.doc-meta { display: flex; justify-content: space-between; margin-top: 24px; font-size: 13.330px; line-height: 18px; }
.client-box {
  margin-top: 14px; height: 90px;
  background: #f0fdf4; border-left: 3px solid #22c55e; border-radius: 6px;
  padding: 13px 13px;
}
.client-title { margin: 0; display: flex; align-items: center; gap: 7px; font-size: 15.600px; line-height: 24px; color: #22c55e; font-weight: 700; }
.emoji-clip { width: 15px; height: 20px; flex: none; }
.client-line { margin: 11px 0 0; font-size: 13.330px; line-height: 20px; }
.notice-box {
  margin-top: 17px; height: 42px;
  background: #fefce8; border-left: 3px solid #eab308; border-radius: 6px;
  padding: 0 13px;
  display: flex; align-items: center; gap: 4px;
  font-size: 13.330px; color: #92400e;
}
.notice-text { padding-top: 1px; }
.emoji-phone { width: 16px; height: 18px; flex: none; }
.items { margin-top: 17px; width: 1866px; table-layout: fixed; border-collapse: collapse; border: 1px solid #e5e7eb; font-size: 13.330px; }
.c-lp { width: 157px; }
.c-name { width: 688px; }
.c-opt { width: 563px; }
.c-per { width: 458px; }
.items th {
  height: 36px; padding: 0 10px; text-align: left;
  color: #fff; font-weight: 700; font-size: 13.330px;
  background: linear-gradient(135deg, #1e40af, #3b82f6);
  border: 1px solid #e5e7eb;
}
.items td { height: 51px; padding: 9px 10px 0; vertical-align: top; border: 1px solid #e5e7eb; line-height: 18px; }
.item-name { font-size: 13.330px; font-weight: 700; color: #1e40af; line-height: 17px; }
.item-sub { font-size: 11.100px; font-weight: 700; color: #666; line-height: 14px; }
.items td.item-opt { font-size: 11.100px; color: #666; padding-top: 9px; }
.items td.item-per { font-weight: 700; text-align: center; }
.totals-box { margin-top: 16px; height: 147px; background: #f9fafb; border-radius: 6px; padding: 17px 16px 0; }
.totals { width: 1835px; table-layout: fixed; border-collapse: collapse; font-size: 13.330px; font-weight: 700; }
.t-label { width: 1078px; }
.t-value { width: 757px; }
.totals td { height: 36px; border: 1px solid #e5e7eb; padding: 0 10px; }
.totals td:last-child { text-align: right; }
.totals .gross td { height: 40px; background: #dbeafe; font-size: 14.400px; letter-spacing: .5px; color: #222; border: 1px solid #dbeafe; border-top-color: #e5e7eb; }
.notes-box { margin-top: 16px; height: 106px; background: #f9fafb; border-radius: 6px; padding: 30px 13px 0; }
.notes-head { display: flex; align-items: center; gap: 6px; font-size: 13.330px; line-height: 20px; }
.emoji-memo { width: 15px; height: 18px; flex: none; }
.notes-text { margin: 13px 0 0; font-size: 13.330px; line-height: 20px; }
.doc-foot {
  margin-top: 25px; height: 37px;
  background: #f9fafb; border-top: 1px solid #e5e7eb; border-radius: 6px;
  display: flex; align-items: center; justify-content: center;
  font-size: 10px; font-weight: 700; color: #555;
}

/* taskbar */
.taskbar {
  height: 50px; flex: none;
  display: flex; align-items: stretch;
  background: linear-gradient(to right, #d0d0d0, #d8d8d8 50%, #ebebeb);
  border-top: 1px solid #c6c6c6;
  font-family: "Open Sans", "Noto Sans", sans-serif;
  color: #111;
}
.start { width: 61px; display: flex; align-items: center; justify-content: center; flex: none; }
.search { width: 359px; background: #fff; margin: 0 0 1px; display: flex; align-items: center; gap: 15px; padding-left: 14px; flex: none; }
.search-text { font-size: 18.200px; }
.task-icons { display: flex; flex: none; }
.task { width: 62px; display: flex; align-items: center; justify-content: center; position: relative; flex: none; }
.task-view { width: 58px; }
.task-doc { width: 67px; padding-left: 5px; }
.task-on::after { content: ""; position: absolute; left: 6px; right: 5px; bottom: 0; height: 3px; background: #0678d4; }
.task-current { background: #eee; }
.task-current::after { left: 0; right: 0; }
.task-split::after { background: linear-gradient(to right, #0678d4 82%, #67aee6 82%); }
.aida-num { font: 700 9px "Liberation Sans", sans-serif; fill: #ffe066; text-anchor: middle; }
.tray { margin-left: auto; display: flex; align-items: center; padding-right: 31px; }
.tray-ball { display: flex; margin-right: 36px; }
.tray-weather { display: flex; margin-right: 9px; }
.badge-num { font: 700 10px "Liberation Sans", sans-serif; fill: #fff; text-anchor: middle; }
.tray-text { font-size: 17px; white-space: nowrap; }
.tray-cond { margin-left: 11px; }
.tray-ic { width: 20px; display: flex; justify-content: center; margin-left: 11px; }
.tray-caret { margin-left: 27px; }
.tray-speaker { margin-left: 9px; }
.tray-near { margin-left: 10px; }
.clock { display: flex; flex-direction: column; align-items: center; font-size: 14px; line-height: 22px; margin: 0 24px 0 12px; width: 70px; white-space: nowrap; }
.notif { display: flex; }
```
